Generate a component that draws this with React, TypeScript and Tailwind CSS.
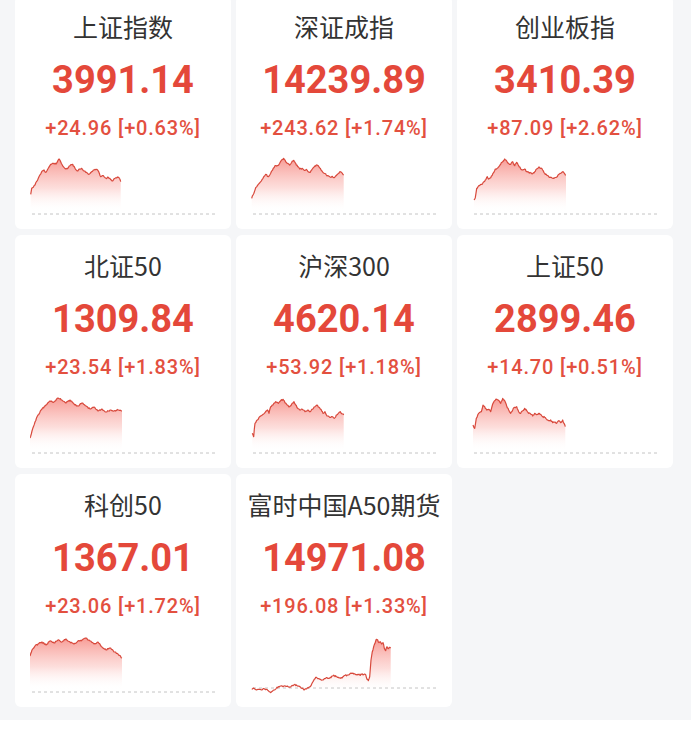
type Pt = [number, number];

// convert points read off a 3x crop into chart-local coordinates
const z = (ox: number, oy: number, pts: Pt[]): Pt[] => pts.map(([x, y]) => [x / 3 + ox, y / 3 + oy]);

// interpolate key points and add a little deterministic jitter so the line looks like ticks
function densify(pts: Pt[], seed: number): Pt[] {
  const out: Pt[] = [];
  let s = seed;
  const rnd = () => {
    s = (s * 9301 + 49297) % 233280;
    return s / 233280 - 0.5;
  };
  for (let i = 0; i < pts.length - 1; i++) {
    const [x0, y0] = pts[i];
    const [x1, y1] = pts[i + 1];
    const steps = Math.max(1, Math.round((x1 - x0) / 0.8));
    for (let k = 0; k < steps; k++) {
      const t = k / steps;
      out.push([x0 + (x1 - x0) * t, y0 + (y1 - y0) * t + (k === 0 ? 0 : rnd() * 1.4)]);
    }
  }
  out.push(pts[pts.length - 1]);
  return out;
}

interface Quote {
  name: string;
  price: string;
  change: string;
  pts: Pt[];
  base: number;
  seed: number;
}

const quotes: Quote[] = [
  {
    name: '上证指数',
    price: '3991.14',
    change: '+24.96 [+0.63%]',
    base: 72,
    seed: 11,
    pts: z(-10, 3, [
      [32, 148], [35, 130], [45, 120], [55, 100], [65, 80], [72, 75], [78, 82], [85, 70], [92, 58], [100, 55],
      [108, 57], [113, 48], [118, 42], [124, 55], [130, 65], [138, 72], [145, 68], [150, 62], [158, 58], [165, 70],
      [172, 78], [178, 72], [185, 70], [192, 78], [200, 82], [207, 88], [215, 80], [222, 75], [230, 73], [236, 80],
      [242, 95], [250, 92], [258, 100], [265, 97], [272, 104], [278, 108], [285, 100], [292, 96], [298, 100], [302, 110],
    ]),
  },
  {
    name: '深证成指',
    price: '14239.89',
    change: '+243.62 [+1.74%]',
    base: 72,
    seed: 23,
    pts: z(-12, 3, [
      [38, 160], [42, 150], [50, 128], [58, 118], [65, 110], [72, 100], [80, 88], [88, 95], [95, 85], [103, 70],
      [108, 62], [115, 62], [122, 55], [128, 45], [134, 40], [140, 50], [146, 55], [152, 60], [158, 52], [164, 46],
      [170, 55], [176, 65], [182, 72], [190, 70], [196, 76], [202, 73], [208, 80], [214, 82], [220, 72], [226, 65],
      [232, 60], [238, 62], [244, 70], [250, 80], [256, 85], [262, 90], [268, 92], [274, 96], [280, 94], [286, 98],
      [292, 92], [298, 85], [304, 80], [310, 85], [314, 90],
    ]),
  },
  {
    name: '创业板指',
    price: '3410.39',
    change: '+87.09 [+2.62%]',
    base: 72,
    seed: 37,
    pts: z(-234, 3, [
      [708, 165], [712, 158], [716, 130], [722, 122], [730, 118], [736, 112], [742, 105], [748, 95], [752, 102],
      [758, 98], [765, 85], [772, 72], [780, 68], [786, 60], [792, 52], [800, 42], [806, 48], [812, 55], [818, 58],
      [824, 50], [830, 62], [836, 52], [842, 62], [848, 72], [854, 75], [860, 72], [866, 80], [872, 82], [878, 84],
      [884, 86], [890, 80], [896, 72], [902, 66], [908, 70], [914, 75], [920, 85], [926, 90], [932, 95], [938, 97],
      [944, 100], [950, 98], [956, 96], [962, 88], [968, 85], [974, 80], [980, 86], [984, 90],
    ]),
  },
  {
    name: '北证50',
    price: '1309.84',
    change: '+23.54 [+1.83%]',
    base: 72,
    seed: 41,
    pts: [
      [0, 57], [2, 50], [5, 41], [8, 34], [12, 28], [16, 24], [20, 20], [24, 21], [28, 17], [32, 19], [36, 22],
      [40, 19], [44, 23], [48, 25], [52, 22], [56, 25], [60, 28], [64, 26], [68, 30], [72, 28], [76, 31], [80, 29],
      [84, 30], [88, 29], [92, 30],
    ],
  },
  {
    name: '沪深300',
    price: '4620.14',
    change: '+53.92 [+1.18%]',
    base: 72,
    seed: 53,
    pts: z(-32, -171, [
      [100, 670], [104, 680], [108, 640], [115, 630], [122, 620], [130, 615], [138, 608], [145, 600], [150, 610],
      [155, 590], [162, 585], [170, 575], [178, 580], [185, 572], [192, 568], [198, 578], [205, 585], [212, 590],
      [218, 582], [225, 575], [230, 585], [236, 595], [242, 600], [250, 598], [258, 605], [266, 600], [274, 605],
      [280, 598], [288, 590], [294, 585], [300, 592], [306, 598], [312, 610], [318, 605], [324, 618], [332, 622],
      [340, 620], [346, 625], [352, 615], [358, 610], [364, 605], [370, 612], [374, 615],
    ]),
  },
  {
    name: '上证50',
    price: '2899.46',
    change: '+14.70 [+0.51%]',
    base: 72,
    seed: 67,
    pts: z(-14, -1, [
      [45, 135], [50, 145], [55, 115], [62, 100], [70, 95], [75, 75], [80, 80], [86, 90], [92, 88], [98, 95],
      [104, 72], [110, 62], [116, 58], [122, 62], [128, 70], [134, 55], [140, 62], [146, 78], [152, 90], [158, 100],
      [164, 90], [170, 82], [176, 80], [182, 95], [188, 100], [194, 92], [200, 85], [206, 92], [212, 100], [218, 102],
      [224, 108], [230, 100], [236, 104], [242, 100], [248, 103], [254, 110], [260, 112], [266, 118], [272, 122],
      [278, 120], [284, 128], [290, 126], [296, 130], [302, 122], [308, 128], [314, 120], [318, 130], [322, 140],
    ]),
  },
  {
    name: '科创50',
    price: '1367.01',
    change: '+23.06 [+1.72%]',
    base: 72,
    seed: 79,
    pts: [
      [0, 36], [2, 30], [5, 26], [8, 24], [12, 22], [16, 25], [20, 21], [24, 23], [28, 20], [32, 22], [36, 19],
      [40, 22], [44, 24], [48, 21], [52, 20], [56, 18], [60, 21], [64, 24], [68, 22], [72, 27], [76, 30], [80, 28],
      [84, 32], [88, 34], [92, 38],
    ],
  },
  {
    name: '富时中国A50期货',
    price: '14971.08',
    change: '+196.08 [+1.33%]',
    base: 68,
    seed: 83,
    pts: z(-12, 0, [
      [38, 208], [45, 205], [52, 210], [60, 208], [68, 210], [75, 206], [82, 208], [88, 212], [95, 218], [100, 214],
      [105, 210], [112, 205], [118, 200], [125, 198], [132, 200], [140, 199], [148, 200], [155, 201], [162, 197],
      [168, 193], [175, 198], [182, 200], [188, 205], [195, 210], [200, 206], [208, 204], [214, 200], [220, 188],
      [226, 178], [232, 172], [238, 176], [244, 178], [250, 180], [256, 176], [262, 173], [268, 175], [274, 172],
      [280, 168], [286, 167], [292, 170], [298, 172], [305, 175], [312, 170], [318, 166], [325, 165], [332, 162],
      [338, 160], [344, 162], [350, 164], [356, 163], [362, 165], [368, 163], [374, 164], [380, 164], [384, 178],
      [388, 182], [392, 170], [396, 120], [400, 95], [404, 80], [408, 70], [412, 58], [416, 60], [420, 68], [424, 65],
      [428, 72], [432, 68], [436, 85], [440, 92], [444, 80], [448, 86], [452, 82], [455, 84],
    ]),
  },
];

function Spark({ q, id }: { q: Quote; id: string }) {
  const line = densify(q.pts, q.seed);
  const d = line.map(([x, y], i) => `${i ? 'L' : 'M'}${x.toFixed(1)} ${y.toFixed(1)}`).join(' ');
  const first = line[0][0];
  const last = line[line.length - 1][0];
  const area = `${d} L${last.toFixed(1)} 70 L${first.toFixed(1)} 70 Z`;
  return (
    <svg width="186" height="76" viewBox="0 0 186 76" className="block">
      <defs>
        <linearGradient id={id} x1="0" y1="0" x2="0" y2="1">
          <stop offset="0" stopColor="#f25a50" stopOpacity="0.6" />
          <stop offset="0.55" stopColor="#f78880" stopOpacity="0.28" />
          <stop offset="1" stopColor="#ffffff" stopOpacity="0" />
        </linearGradient>
      </defs>
      <line x1="2" y1={q.base} x2="186" y2={q.base} stroke="#c4c4c4" strokeWidth="1" strokeDasharray="3 3" />
      <path d={area} fill={`url(#${id})`} />
      <path d={d} fill="none" stroke="#d8493c" strokeWidth="1.2" strokeLinejoin="round" />
    </svg>
  );
}

function Card({ q, idx }: { q: Quote; idx: number }) {
  return (
    <div className="h-[233px] bg-white rounded-md flex flex-col items-center">
      <div className="pt-[14px] text-[25px] leading-[32px] text-[#333] font-['Noto_Sans_CJK_SC',sans-serif]">{q.name}</div>
      <div className="mt-[16px] text-[38px] leading-[44px] font-bold text-[#e4483a] font-['Roboto','Noto_Sans_CJK_SC',sans-serif]">
        {q.price}
      </div>
      <div className="mt-[14px] text-[20px] leading-[24px] font-medium tracking-[0.8px] text-[#e3503f] font-['Roboto','Noto_Sans_CJK_SC',sans-serif]">
        {q.change}
      </div>
      <div className="mt-[2px] w-full px-[15px]">
        <Spark q={q} id={`g${idx}`} />
      </div>
    </div>
  );
}

export default function App() {
  return (
    <div className="w-[691px] h-[737px] overflow-hidden bg-white">
      <div className="bg-[#f5f6f8] px-[15px] pb-[13px]">
        <div className="-mt-[4px] grid grid-cols-[216px_216px_216px] gap-x-[5px] gap-y-[6px]">
          {quotes.map((q, i) => (
            <Card key={q.name} q={q} idx={i} />
          ))}
        </div>
      </div>
    </div>
  );
}
